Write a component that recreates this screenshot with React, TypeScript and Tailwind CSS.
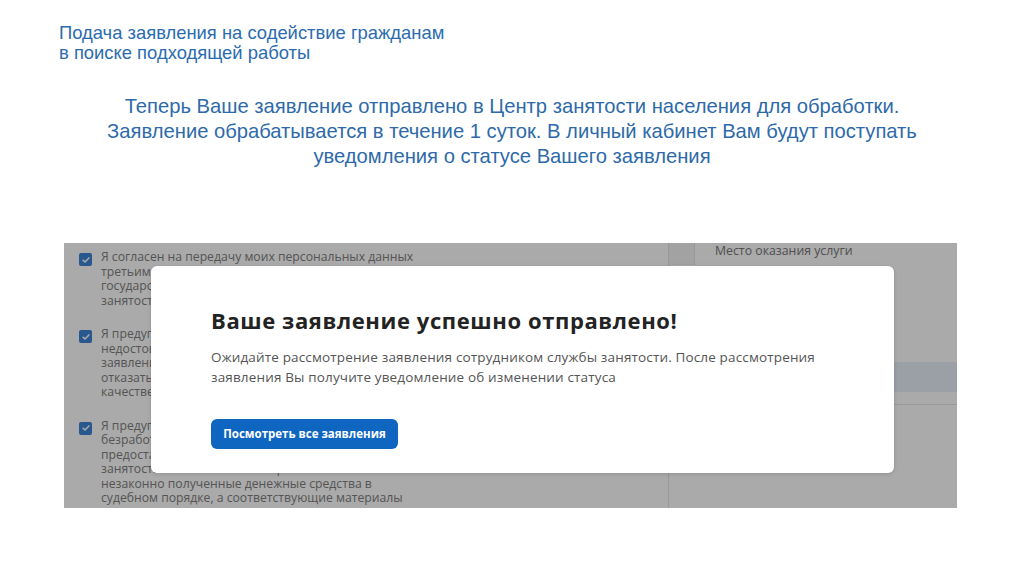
import React from "react";

const items = [
  [
    "Я согласен на передачу моих персональных данных",
    "третьим лицам, в том числе органам исполнительной",
    "государственной власти и органам службы",
    "занятости населения",
  ],
  [
    "Я предупрежден, что в случае представления",
    "недостоверных сведений, указанных в настоящем",
    "заявлении, органы службы занятости вправе",
    "отказать мне в регистрации и признании в",
    "качестве безработного",
  ],
  [
    "Я предупрежден, что в случае получения пособия по",
    "безработице обманным путем, в том числе при",
    "предоставлении ложных сведений, орган службы",
    "занятости населения имеет право взыскать",
    "незаконно полученные денежные средства в",
    "судебном порядке, а соответствующие материалы",
  ],
];

function Check() {
  return (
    <span className="mt-[3px] flex h-[13px] w-[13px] shrink-0 items-center justify-center rounded-[2px] bg-[#3c84d6]">
      <svg viewBox="0 0 12 12" className="h-[10px] w-[10px]" fill="none" stroke="white" strokeWidth="1.8" strokeLinecap="round" strokeLinejoin="round">
        <path d="M2.5 6.2l2.3 2.3 4.7-5" />
      </svg>
    </span>
  );
}

export default function App() {
  return (
    <div className="h-[576px] w-[1024px] overflow-hidden bg-white" style={{ fontFamily: "'Liberation Sans', Arial, sans-serif" }}>
      {/* slide title */}
      <div className="pl-[59px] pt-[23px] text-[18.4px] leading-[20px] text-[#2b6cb0]">
        <div>Подача заявления на содействие гражданам</div>
        <div>в поиске подходящей работы</div>
      </div>

      {/* slide message */}
      <div className="mt-[31px] text-center text-[20.2px] leading-[25px] text-[#2e6aa9]">
        <div>Теперь Ваше заявление отправлено в Центр занятости населения для обработки.</div>
        <div>Заявление обрабатывается в течение 1 суток. В личный кабинет Вам будут поступать</div>
        <div>уведомления о статусе Вашего заявления</div>
      </div>

      {/* screenshot */}
      <div className="relative ml-[64px] mt-[74px] h-[265px] w-[893px] overflow-hidden bg-white" style={{ fontFamily: "'Open Sans', sans-serif" }}>
        <div className="flex h-full">
          <div className="w-[604px] pl-[15px] pt-[7px]">
            {items.map((lines, i) => (
              <div key={i} className="mb-[19px] flex gap-[9px]">
                <Check />
                <div className="text-[12.2px] leading-[14.5px] text-[#808080]">
                  {lines.map((l) => (
                    <div key={l} className="whitespace-nowrap">{l}</div>
                  ))}
                </div>
              </div>
            ))}
          </div>
          <div className="flex-1 border-l border-[#e8e8e8]">
            <div className="flex h-[22px]">
              <div className="w-[26px] border-r border-[#e4e4e4] bg-[#f4f4f4]" />
              <div className="pl-[20px] pt-px text-[12.3px] leading-[14px] text-[#777]">Место оказания услуги</div>
            </div>
            <div className="mt-[97px] h-[30px] bg-[#e8f0fa]" />
            <div className="mt-[12px] h-px bg-[#e6e6e6]" />
          </div>
        </div>

        {/* overlay */}
        <div className="absolute inset-0 bg-black/[0.333]" />

        {/* modal */}
        <div className="absolute left-[87px] top-[23px] h-[207px] w-[743px] rounded-[6px] bg-white pl-[60px] pt-[40px] shadow-[0_1px_4px_rgba(0,0,0,0.15)]">
          <div className="text-[22px] font-bold leading-[28px] tracking-[0.6px] text-[#232323]">
            Ваше заявление успешно отправлено!
          </div>
          <div className="mt-[13px] text-[13.5px] leading-[20px] tracking-[0.15px] text-[#555]">
            <div>Ожидайте рассмотрение заявления сотрудником службы занятости. После рассмотрения</div>
            <div>заявления Вы получите уведомление об изменении статуса</div>
          </div>
          <button className="mt-[32px] flex h-[30px] w-[187px] items-center justify-center rounded-[6px] bg-[#0f66c1] text-[11.5px] font-bold text-white">
            Посмотреть все заявления
          </button>
        </div>
      </div>
    </div>
  );
}
